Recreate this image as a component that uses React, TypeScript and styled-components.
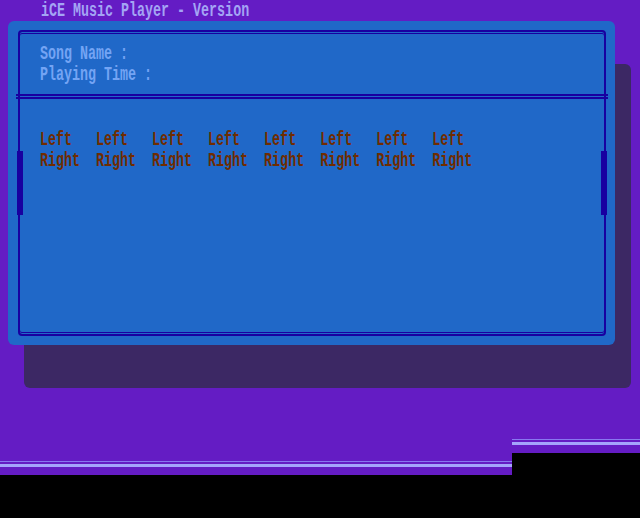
import * as React from "react"
import styled, { createGlobalStyle } from "styled-components"

const GlobalStyle = createGlobalStyle`
  html, body {
    margin: 0;
    padding: 0;
    background: #641cc4;
  }
`

const Page = styled.div`
  width: 640px;
  height: 518px;
  display: flex;
  flex-direction: column;
  background: #641cc4;
  overflow: hidden;
  font-family: "Liberation Mono", "DejaVu Sans Mono", monospace;
  font-weight: bold;
  font-size: 20px;
  line-height: 21px;
`

// 8x16 text-mode look: a 12px-wide mono glyph squeezed to 8px
const Squeeze = styled.div<{ $color: string }>`
  display: inline-block;
  white-space: pre;
  color: ${p => p.$color};
  transform: scaleX(0.667);
  transform-origin: 0 0;
`

const TitleBar = styled.div`
  height: 21px;
  padding-left: 41px;
  flex-shrink: 0;
`

const Window = styled.div`
  margin-left: 8px;
  width: 607px;
  height: 324px;
  box-sizing: border-box;
  padding: 9px 9px 9px 10px;
  background: #2068c8;
  border-radius: 6px;
  box-shadow: 16px 43px 0 0 #3c2864;
  flex-shrink: 0;
`

const Frame = styled.div`
  height: 100%;
  box-sizing: border-box;
  display: flex;
  flex-direction: column;
  border: 2px solid #1800a0;
  border-radius: 4px;
  box-shadow:
    inset 0 1px 0 #2068c8,
    inset 0 2px 0 #1800a0,
    inset 0 -1px 0 #2068c8,
    inset 0 -2px 0 #1800a0;
`

const Header = styled.div`
  height: 62px;
  box-sizing: border-box;
  padding: 11px 0 0 20px;
  display: flex;
  flex-direction: column;
`

const Divider = styled.div`
  height: 1px;
  margin: 0 -4px;
  border-top: 2px solid #1800a0;
  border-bottom: 2px solid #1800a0;
`

const Body = styled.div`
  position: relative;
  flex: 1;
  padding: 30px 0 0 20px;

  &::before,
  &::after {
    content: "";
    position: absolute;
    top: 52px;
    width: 6px;
    height: 64px;
    background: #1800a0;
  }
  &::before { left: -3px; }
  &::after { right: -3px; }
`

const Channels = styled.div`
  display: grid;
  grid-template-columns: repeat(8, 84px);
  color: #702c00;
  transform: scaleX(0.667);
  transform-origin: 0 0;
`

const Footer = styled.div`
  flex: 1;
  display: flex;
  align-items: flex-end;
`

const Column = styled.div<{ $width?: number }>`
  display: flex;
  flex-direction: column;
  ${p => (p.$width ? `width: ${p.$width}px;` : "flex: 1;")}
`

const Stripes = styled.div`
  height: 3px;
  padding-top: 2px;
  border-top: 1px solid #8878f0;
  background: #a4a4fc;
  background-clip: content-box;
  margin-bottom: 8px;
`

const Ground = styled.div<{ $height: number }>`
  height: ${p => p.$height}px;
  background: #000;
`

const channels = Array.from({ length: 8 })

export default function App() {
  return (
    <Page>
      <GlobalStyle />
      <TitleBar>
        <Squeeze $color="#a4a4f4">iCE Music Player - Version</Squeeze>
      </TitleBar>
      <Window>
        <Frame>
          <Header>
            <Squeeze $color="#74a4f4">Song Name :</Squeeze>
            <Squeeze $color="#74a4f4">Playing Time :</Squeeze>
          </Header>
          <Divider />
          <Body>
            <Channels>
              {channels.map((_, i) => (
                <span key={`l${i}`}>Left</span>
              ))}
              {channels.map((_, i) => (
                <span key={`r${i}`}>Right</span>
              ))}
            </Channels>
          </Body>
        </Frame>
      </Window>
      <Footer>
        <Column $width={512}>
          <Stripes />
          <Ground $height={43} />
        </Column>
        <Column>
          <Stripes />
          <Ground $height={65} />
        </Column>
      </Footer>
    </Page>
  )
}
